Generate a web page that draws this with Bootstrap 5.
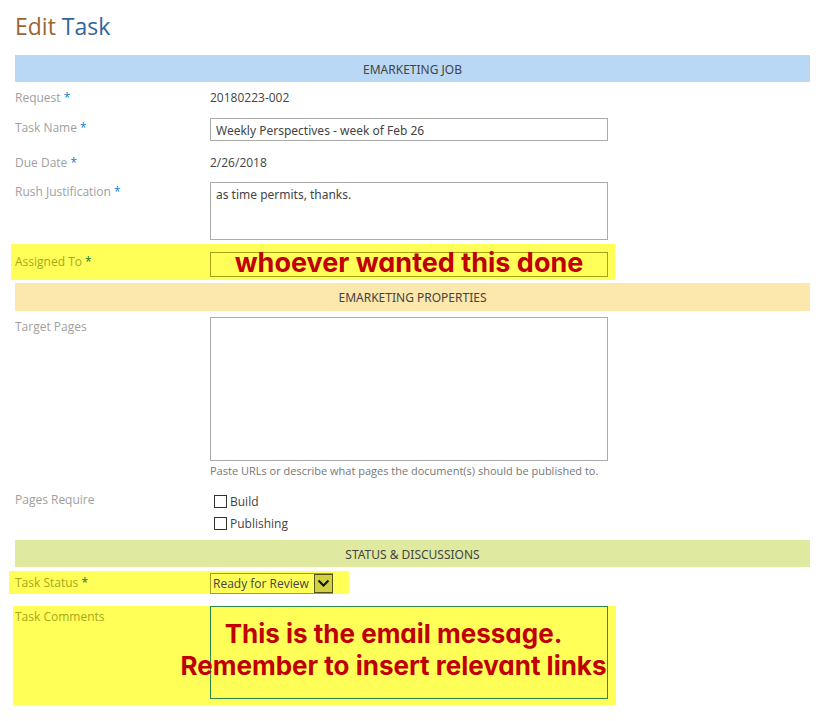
<!DOCTYPE html>
<html lang="en">
<head>
<meta charset="utf-8">
<meta name="viewport" content="width=device-width, initial-scale=1">
<title>Edit Task</title>
<link href="https://cdn.jsdelivr.net/npm/bootstrap@5.3.0/dist/css/bootstrap.min.css" rel="stylesheet">
<style>
body{font-family:"Segoe UI","Open Sans","Noto Sans",sans-serif;font-size:12px;line-height:20px;color:#444;background:#fff}
.task-page{padding:8px 23px 16px 15px}
.page-title{font-size:23px;line-height:36px;margin:0 0 11px;color:#9c6530}
.page-title span{color:#31659c}
.band{font-family:"Segoe UI","Noto Sans",sans-serif;font-size:12px;line-height:29px;height:27px;margin:0;text-align:center;color:#444}
.band-job{background:#b9d8f5}
.band-props{background:#fce7ac;height:28px}
.band-status{background:#dfe9a0}
.line{display:grid;grid-template-columns:195px minmax(0,398px);padding:6px 0 4px}
.line-label{color:#a0a0a0}
.req{color:#0f80d0}
.field{font-family:"Segoe UI","Noto Sans",sans-serif;border-radius:0;border:1px solid #ababab;padding:3px 5px;font-size:12px;line-height:18px;color:#444;background:transparent;resize:none;display:block;width:100%}
.one{height:23px;padding-top:3px;padding-bottom:1px}
.assign{height:25px}
.rush{height:58px}
.target{height:144px}
.comments{height:93px}
.hint{color:#777;font-size:11px;line-height:18px;margin:0;padding-top:1px}
.check-line{height:22px;padding-left:4px;gap:3px}
.check-line input{width:13px;height:13px;margin:0;appearance:none;border:1px solid #333;background:#fff}
.check-line input:checked{background:#444}
.check-line label{padding-top:1px}
.marked{background:#ffff57;margin-left:-4px;padding-left:4px;max-width:604px}
.marked .line-label{color:#a7a71c}
.marked .req{color:#0b7d35}
.marked .field{border-color:#a3a317}
.marked .comments{border-color:#2b8a4b}
.marked-assign{padding-top:8px;padding-bottom:3px;margin-bottom:3px}
.marked-status{padding-top:2px;padding-bottom:0;margin:4px 0 12px -6px;padding-left:6px;max-width:340px}
.marked-comments{padding:0 0 6px 2px;margin-left:-2px;max-width:603px}
.marked-comments .line-label{padding-top:1px}
.name-line{padding-bottom:6px}
.due-line{padding-bottom:3px}
.checks-line{padding-bottom:6px}
.status-box{width:123px}
.status-box select{font-family:"Segoe UI","Open Sans",sans-serif;appearance:none;height:21px;padding:1px 18px 0 2px}
.status-box svg{position:absolute;top:1px;right:0;pointer-events:none}
.note{position:absolute;font-family:"Century Gothic",Inter,sans-serif;font-feature-settings:"cv11";font-weight:700;font-size:27px;line-height:32px;color:#c00000;white-space:nowrap;text-align:center;margin:0;pointer-events:none}
.note-assign{top:-5px;left:0;right:0}
.note-comments{font-size:26px;top:12px;left:-31px;right:0}
</style>
</head>
<body>
<main class="task-page">
<h1 class="page-title fw-normal">Edit <span>Task</span></h1>
<form>
<h2 class="band band-job fw-normal">EMARKETING JOB</h2>
<div class="line"><div class="line-label">Request <span class="req">*</span></div><div>20180223-002</div></div>
<div class="line name-line"><label class="line-label" for="name">Task Name <span class="req">*</span></label><input class="field one" id="name" type="text" value="Weekly Perspectives - week of Feb 26"></div>
<div class="line due-line"><div class="line-label">Due Date <span class="req">*</span></div><div>2/26/2018</div></div>
<div class="line"><label class="line-label" for="rush">Rush Justification <span class="req">*</span></label><textarea class="field rush" id="rush">as time permits, thanks.</textarea></div>
<div class="line marked marked-assign"><label class="line-label" for="assigned">Assigned To <span class="req">*</span></label><div class="position-relative"><input class="field assign" id="assigned" type="text"><p class="note note-assign">whoever wanted this done</p></div></div>

<h2 class="band band-props fw-normal">EMARKETING PROPERTIES</h2>
<div class="line"><label class="line-label" for="target">Target Pages</label><div><textarea class="field target" id="target" aria-describedby="target-hint"></textarea><p class="hint" id="target-hint">Paste URLs or describe what pages the document(s) should be published to.</p></div></div>
<div class="line checks-line" role="group" aria-labelledby="require"><div class="line-label" id="require">Pages Require</div><div>
<div class="check-line d-flex align-items-center"><input type="checkbox" id="build"><label for="build">Build</label></div>
<div class="check-line d-flex align-items-center"><input type="checkbox" id="publishing"><label for="publishing">Publishing</label></div>
</div></div>

<h2 class="band band-status fw-normal">STATUS &amp; DISCUSSIONS</h2>
<div class="line marked marked-status"><label class="line-label" for="status">Task Status <span class="req">*</span></label><div class="status-box position-relative"><select class="field" id="status"><option>Ready for Review</option></select>
<svg width="19" height="19" viewBox="0 0 19 19" aria-hidden="true"><rect x=".5" y=".5" width="18" height="18" fill="#d0d044" stroke="#55551c"/><path d="M4.5 6.5l5 5 5-5" fill="none" stroke="#111" stroke-width="2"/></svg></div></div>
<div class="line marked marked-comments"><label class="line-label" for="comments">Task Comments</label><div class="position-relative"><textarea class="field comments" id="comments"></textarea><p class="note note-comments">This is the email message.<br>Remember to insert relevant links</p></div></div>
</form>
</main>
<script src="https://cdn.jsdelivr.net/npm/bootstrap@5.3.0/dist/js/bootstrap.bundle.min.js"></script>
</body>
</html>
